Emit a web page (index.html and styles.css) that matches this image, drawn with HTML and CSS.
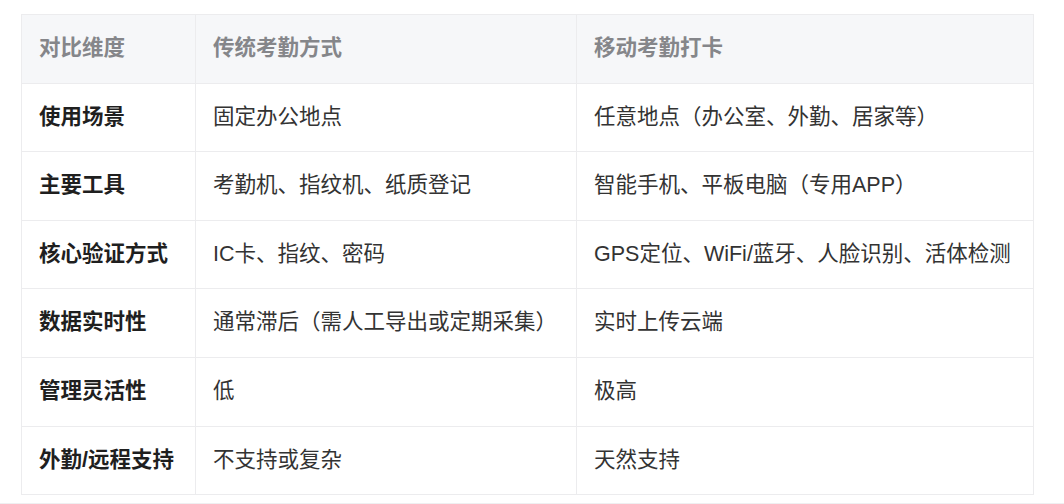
FILE: index.html
```html
<!DOCTYPE html>
<html lang="zh-CN">
<head>
<meta charset="utf-8">
<link rel="stylesheet" href="styles.css">
</head>
<body>
<div class="page">
  <table class="cmp">
    <colgroup>
      <col class="c1"><col class="c2"><col class="c3">
    </colgroup>
    <thead>
      <tr><th>对比维度</th><th>传统考勤方式</th><th>移动考勤打卡</th></tr>
    </thead>
    <tbody>
      <tr><td class="dim">使用场景</td><td>固定办公地点</td><td>任意地点（办公室、外勤、居家等）</td></tr>
      <tr><td class="dim">主要工具</td><td>考勤机、指纹机、纸质登记</td><td>智能手机、平板电脑（专用APP）</td></tr>
      <tr><td class="dim">核心验证方式</td><td>IC卡、指纹、密码</td><td>GPS定位、WiFi/蓝牙、人脸识别、活体检测</td></tr>
      <tr><td class="dim">数据实时性</td><td>通常滞后（需人工导出或定期采集）</td><td>实时上传云端</td></tr>
      <tr><td class="dim">管理灵活性</td><td>低</td><td>极高</td></tr>
      <tr><td class="dim">外勤/远程支持</td><td>不支持或复杂</td><td>天然支持</td></tr>
    </tbody>
  </table>
</div>
</body>
</html>
```

FILE: styles.css
```css
html, body {
  margin: 0;
  padding: 0;
  background: #ffffff;
}
.page {
  box-sizing: border-box;
  width: 1064px;
  height: 504px;
  padding: 14px 0 0 21px;
  border-bottom: 1px solid #efeff1;
  font-family: "Liberation Sans", "Noto Sans CJK SC", sans-serif;
}
.cmp {
  border-collapse: collapse;
  table-layout: fixed;
  width: 1012px;
  font-size: 21.5px;
  line-height: 33.6px;
  color: #333333;
}
.c1 { width: 174px; }
.c2 { width: 381px; }
.c3 { width: 457px; }
.cmp th, .cmp td {
  border: 1px solid #ececee;
  padding: 17px 17px;
  text-align: left;
  vertical-align: middle;
  white-space: nowrap;
}
.cmp th {
  background: #f6f7f9;
  color: #85868a;
  font-weight: 700;
}
.cmp td.dim {
  font-weight: 700;
  color: #1f1f1f;
}
```
